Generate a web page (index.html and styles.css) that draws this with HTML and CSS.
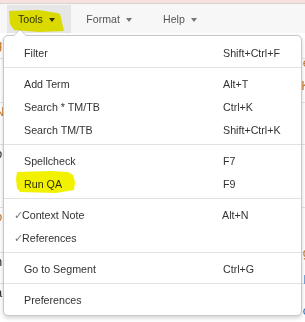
FILE: index.html
```html
<!DOCTYPE html>
<html>
<head>
<meta charset="utf-8">
<link rel="stylesheet" href="styles.css">
</head>
<body>
<div class="topstrip"></div>
<nav class="menubar">
  <div class="mitem active"><span>Tools</span><span class="caret"></span></div>
  <div class="mitem"><span>Format</span><span class="caret"></span></div>
  <div class="mitem"><span>Help</span><span class="caret"></span></div>
</nav>
<div class="page">
  <div class="row r1"><span class="l o">g</span><span class="r o">e</span></div>
  <div class="row r2"><span class="l b">l</span><span class="r o">K</span></div>
  <div class="row r3"><span class="l o">N</span><span class="l b">t</span><span class="r red">-</span></div>
  <div class="row r4"><span class="l d">o</span><span class="l b">r</span><span class="r b">l</span></div>
  <div class="row r5"><span class="l o">o</span><span class="l b">l</span><span class="r o">g</span></div>
  <div class="row r6"><span class="l d">n</span><span class="r b">k</span></div>
  <div class="row r7"><span class="l d">a</span><span class="r b">o</span></div>
</div>

<div class="hl hl-tools"></div>
<div class="hl hl-qa"></div>

<div class="dropdown">
  <div class="item"><span class="label">Filter</span><span class="key">Shift+Ctrl+F</span></div>
  <div class="sep"></div>
  <div class="item"><span class="label">Add Term</span><span class="key">Alt+T</span></div>
  <div class="item"><span class="label">Search * TM/TB</span><span class="key">Ctrl+K</span></div>
  <div class="item"><span class="label">Search TM/TB</span><span class="key">Shift+Ctrl+K</span></div>
  <div class="sep"></div>
  <div class="item"><span class="label">Spellcheck</span><span class="key">F7</span></div>
  <div class="item"><span class="label">Run QA</span><span class="key">F9</span></div>
  <div class="sep"></div>
  <div class="item checked"><span class="label"><span class="check">✓</span>Context Note</span><span class="key">Alt+N</span></div>
  <div class="item checked"><span class="label"><span class="check">✓</span>References</span><span class="key"></span></div>
  <div class="sep"></div>
  <div class="item"><span class="label">Go to Segment</span><span class="key">Ctrl+G</span></div>
  <div class="sep"></div>
  <div class="item"><span class="label">Preferences</span><span class="key"></span></div>
</div>
</body>
</html>
```
FILE: styles.css
```css
html, body {
  margin: 0;
  padding: 0;
  width: 305px;
  height: 322px;
  overflow: hidden;
  background: #fff;
  font-family: "Liberation Sans", Arial, sans-serif;
  color: #333;
}
body { position: relative; }

.topstrip {
  height: 3px;
  background: #f6e2dc;
  border-bottom: 1px solid #d9d2d0;
}

.menubar {
  display: flex;
  height: 29px;
  background: #f7f7f7;
  padding-left: 7px;
  font-size: 10.6px;
  color: #555;
}
.mitem {
  display: flex;
  align-items: center;
  padding: 0 15.5px 0 15.6px;
  gap: 6px;
  height: 28px;
  margin-top: 1px;
}
.mitem.active {
  background: #e6e6e6;
  padding-left: 11px;
  padding-right: 16px;
  color: #333;
}
.caret {
  width: 0;
  height: 0;
  border-left: 3px solid transparent;
  border-right: 3px solid transparent;
  border-top: 4px solid #777;
  margin-top: 1px;
}
.mitem.active .caret { border-top-color: #333; }

.page {
  display: flex;
  flex-direction: column;
  margin-top: 3px;
  font-size: 13px;
}
.row {
  display: flex;
  flex-direction: column;
  border-bottom: 1px solid #e3e3e3;
}
.row .l { margin-left: -5px; line-height: 18px; }
.row .r { align-self: flex-end; margin-right: -5px; line-height: 18px; }
.r1 { height: 22px; }
.r2 { height: 43px; }
.r3 { height: 41px; }
.r4 { height: 62px; }
.r5 { height: 44px; }
.r6 { height: 30px; }
.r7 { height: 40px; border-bottom: 0; }
.o { color: #c77a2a; }
.b { color: #2a7ac7; }
.d { color: #333; }
.red { color: #e02020; }

.hl {
  position: absolute;
  background: #f2f200;
  mix-blend-mode: multiply;
  z-index: 5;
}
.hl-tools {
  left: 9px;
  top: 10px;
  width: 55px;
  height: 22px;
  clip-path: polygon(0 1px, 30px 0, 48px 3px, 51px 4px, 55px 21px, 30px 22px, 5px 20px, 1px 14px);
}
.hl-qa {
  left: 16px;
  top: 171px;
  width: 59px;
  height: 22px;
  clip-path: polygon(1px 1px, 35px 0, 52px 1px, 57px 4px, 59px 11px, 58px 19px, 40px 22px, 4px 21px, 1px 17px, 0 8px);
}

.dropdown {
  position: absolute;
  left: 3px;
  top: 35px;
  width: 297px;
  padding: 5px 0 4px;
  background: #fff;
  border: 1px solid #c8c8c8;
  border-radius: 5px;
  box-shadow: 0 2px 4px rgba(0,0,0,0.18);
  font-size: 10.7px;
  color: #333;
  z-index: 3;
}
.dropdown::before {
  content: "";
  position: absolute;
  left: 9px;
  top: -7px;
  border-left: 7px solid transparent;
  border-right: 7px solid transparent;
  border-bottom: 7px solid #c8c8c8;
}
.dropdown::after {
  content: "";
  position: absolute;
  left: 10px;
  top: -6px;
  border-left: 6px solid transparent;
  border-right: 6px solid transparent;
  border-bottom: 6px solid #fff;
}
.item {
  display: grid;
  grid-template-columns: 219px 1fr;
  height: 23px;
  align-items: center;
}
.label { padding-left: 20px; white-space: nowrap; }
.key { white-space: nowrap; }
.checked .label { padding-left: 10px; }
.checked .key { margin-left: -1px; }
.check {
  display: inline-block;
  width: 8px;
  color: #777;
  font-family: "DejaVu Sans", sans-serif;
  font-size: 11px;
  line-height: 1;
}
.sep {
  height: 1px;
  background: #e2e2e2;
  margin: 3px 0 4px;
}
```
